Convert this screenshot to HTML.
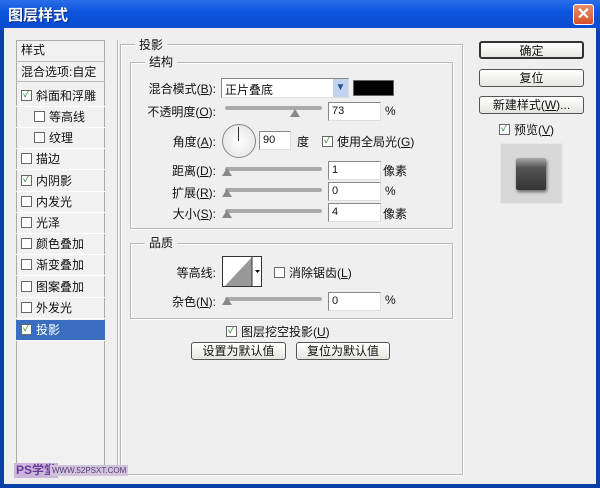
<!DOCTYPE html>
<html><head><meta charset="utf-8"><style>
*{margin:0;padding:0;box-sizing:border-box}
body{width:600px;height:488px;overflow:hidden;background:#0a3fa8;font-family:"Liberation Sans","Noto Sans CJK SC","WenQuanYi Zen Hei",sans-serif;font-size:12px;color:#111;position:relative}
.a{position:absolute}
#title{left:0;top:0;width:600px;height:30px;background:linear-gradient(#2a6ee8,#0b55dd 40%,#0a4bd0);color:#fff;font-weight:bold;font-size:15px;padding:4px 0 0 8px;text-shadow:1px 1px #0a2a80}
#body{left:4px;top:28px;width:592px;height:456px;background:#efefef}
#close{left:573px;top:4px;width:21px;height:21px;background:linear-gradient(#e8906c,#d4502a);border:1px solid #fff;border-radius:3px;color:#fff;font-size:16px;text-align:center;line-height:19px;font-weight:bold}
.list{left:16px;top:40px;width:89px;height:436px;border:1px solid #aaa;background:#f1f1f1}
.it{position:absolute;left:16px;width:89px;height:21px;border-bottom:1px solid #fff;font-size:12px;line-height:21px;padding-left:5px}
.cb{display:inline-block;width:11px;height:11px;border:1px solid #666;background:#fff;vertical-align:-1px;margin-right:4px;font-size:10px;line-height:8px;text-align:center;color:#2a8a2a;overflow:hidden}
.sel{background:#3a6cc0;color:#fff}
.grp{border:1px solid #b8b8b8;box-shadow:inset 1px 1px #fff,1px 1px #fff}
.lg{position:absolute;background:#efefef;padding:0 4px;font-size:12px}
.lbl{position:absolute;text-align:right;width:100px;font-size:12px}
.inp{position:absolute;height:19px;border:1px solid #888;border-right-color:#ddd;border-bottom-color:#ddd;background:#fff;font-size:11px;padding:2px 3px}
.sl{position:absolute;height:4px;background:#aaa;border-radius:2px;width:97px;left:225px}
.th{position:absolute;width:0;height:0;border-left:5px solid transparent;border-right:5px solid transparent;border-bottom:8px solid #888}
.btn{position:absolute;height:18px;border:1px solid #555;border-radius:3px;background:linear-gradient(#fff,#e6e6e0);text-align:center;font-size:12px;line-height:16px}
</style></head><body>
<div class="a" id="title">图层样式</div>
<div class="a" id="close">✕</div>
<div class="a" id="body"></div>

<div class="a list"></div>
<div class="it" style="top:40px;height:22px;border-bottom:1px solid #bbb">样式</div>
<div class="it" style="top:62px;height:20px;border-bottom:1px solid #bbb">混合选项:自定</div>
<div class="it" style="top:86px"><span class="cb">✓</span>斜面和浮雕</div>
<div class="it" style="top:107px;padding-left:18px"><span class="cb"></span>等高线</div>
<div class="it" style="top:128px;padding-left:18px"><span class="cb"></span>纹理</div>
<div class="it" style="top:149px"><span class="cb"></span>描边</div>
<div class="it" style="top:171px"><span class="cb">✓</span>内阴影</div>
<div class="it" style="top:192px"><span class="cb"></span>内发光</div>
<div class="it" style="top:213px"><span class="cb"></span>光泽</div>
<div class="it" style="top:234px"><span class="cb"></span>颜色叠加</div>
<div class="it" style="top:255px"><span class="cb"></span>渐变叠加</div>
<div class="it" style="top:277px"><span class="cb"></span>图案叠加</div>
<div class="it" style="top:298px"><span class="cb"></span>外发光</div>
<div class="it sel" style="top:320px;height:21px"><span class="cb">✓</span>投影</div>
<div class="a" style="left:104px;top:40px;width:14px;height:436px;border-right:1px solid #bbb"></div>

<div class="a grp" style="left:120px;top:44px;width:343px;height:431px"></div>
<div class="lg" style="left:135px;top:36px">投影</div>
<div class="a grp" style="left:130px;top:62px;width:323px;height:167px"></div>
<div class="lg" style="left:145px;top:53px">结构</div>

<div class="lbl" style="left:116px;top:80px">混合模式(<u>B</u>):</div>
<div class="inp" style="left:221px;top:78px;width:128px;height:20px;font-size:12px">正片叠底</div>
<div class="a" style="left:333px;top:79px;width:15px;height:18px;background:#c0d4f0;color:#2a4a9a;font-size:10px;text-align:center;line-height:18px">▼</div>
<div class="a" style="left:353px;top:80px;width:41px;height:16px;background:#000;border:1px solid #666"></div>

<div class="lbl" style="left:116px;top:103px">不透明度(<u>O</u>):</div>
<div class="sl" style="top:106px"></div><div class="th" style="left:290px;top:109px"></div>
<div class="inp" style="left:328px;top:102px;width:53px">73</div><div class="a" style="left:385px;top:104px">%</div>

<div class="lbl" style="left:116px;top:133px">角度(<u>A</u>):</div>
<div class="a" style="left:222px;top:124px;width:34px;height:34px;border-radius:50%;border:1px solid #888;background:radial-gradient(#fff,#e0e0e0)"></div>
<div class="a" style="left:238px;top:127px;width:1px;height:14px;background:#333"></div>
<div class="inp" style="left:259px;top:131px;width:32px">90</div>
<div class="a" style="left:297px;top:133px">度</div>
<div class="a" style="left:322px;top:133px"><span class="cb">✓</span>使用全局光(<u>G</u>)</div>

<div class="lbl" style="left:116px;top:162px">距离(<u>D</u>):</div>
<div class="sl" style="top:167px"></div><div class="th" style="left:222px;top:168px"></div>
<div class="inp" style="left:328px;top:161px;width:53px">1</div><div class="a" style="left:383px;top:162px">像素</div>
<div class="lbl" style="left:116px;top:184px">扩展(<u>R</u>):</div>
<div class="sl" style="top:188px"></div><div class="th" style="left:222px;top:189px"></div>
<div class="inp" style="left:328px;top:182px;width:53px">0</div><div class="a" style="left:385px;top:184px">%</div>
<div class="lbl" style="left:116px;top:205px">大小(<u>S</u>):</div>
<div class="sl" style="top:209px"></div><div class="th" style="left:222px;top:210px"></div>
<div class="inp" style="left:328px;top:203px;width:53px">4</div><div class="a" style="left:383px;top:205px">像素</div>

<div class="a grp" style="left:130px;top:243px;width:323px;height:76px"></div>
<div class="lg" style="left:145px;top:234px">品质</div>
<div class="lbl" style="left:116px;top:264px">等高线:</div>
<div class="a" style="left:222px;top:256px;width:40px;height:31px;border:1px solid #333;background:#fff;overflow:hidden">
<svg width="40" height="31"><polygon points="0,31 29,0 29,31" fill="#999"/><line x1="29" y1="0" x2="29" y2="31" stroke="#333"/><polygon points="32,13 37,13 34.5,16" fill="#000"/></svg></div>
<div class="a" style="left:274px;top:264px"><span class="cb"></span>消除锯齿(<u>L</u>)</div>
<div class="lbl" style="left:116px;top:293px">杂色(<u>N</u>):</div>
<div class="sl" style="top:297px"></div><div class="th" style="left:222px;top:297px"></div>
<div class="inp" style="left:328px;top:292px;width:53px">0</div><div class="a" style="left:385px;top:293px">%</div>

<div class="a" style="left:226px;top:323px"><span class="cb">✓</span>图层挖空投影(<u>U</u>)</div>
<div class="btn" style="left:191px;top:342px;width:95px">设置为默认值</div>
<div class="btn" style="left:296px;top:342px;width:94px">复位为默认值</div>

<div class="btn" style="left:479px;top:41px;width:105px;border:2px solid #333">确定</div>
<div class="btn" style="left:479px;top:69px;width:105px">复位</div>
<div class="btn" style="left:479px;top:96px;width:105px">新建样式(<u>W</u>)...</div>
<div class="a" style="left:499px;top:121px"><span class="cb">✓</span>预览(<u>V</u>)</div>
<div class="a" style="left:500px;top:143px;width:63px;height:61px;background:#d8d8d8;border:1px solid #e8e8e8"></div>
<div class="a" style="left:516px;top:158px;width:30px;height:32px;background:linear-gradient(#aaa,#555 30%,#333);border-radius:2px;box-shadow:1px 2px 3px #666"></div>

<div class="a" style="left:14px;top:463px;background:#c9b6d8;color:#6a3a9a;font-size:12px;font-weight:bold;padding:0 2px;line-height:15px">PS学堂</div>
<div class="a" style="left:50px;top:465px;background:#d0c4dc;color:#5a3a7a;font-size:8px;padding:0 2px;line-height:11px">WWW.52PSXT.COM</div>
</body></html>
